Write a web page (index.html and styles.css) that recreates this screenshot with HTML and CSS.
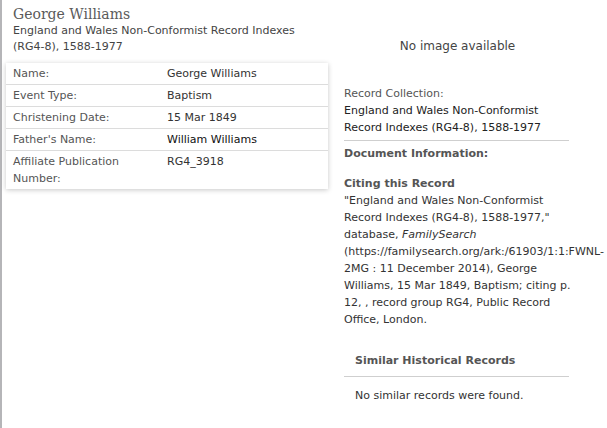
FILE: index.html
```html
<!DOCTYPE html>
<html>
<head>
<meta charset="utf-8">
<link rel="stylesheet" href="styles.css">
</head>
<body>
<div class="page">
  <div class="left">
    <div class="header">
      <h1 class="name">George Williams</h1>
      <div class="coll">England and Wales Non-Conformist Record Indexes (RG4-8), 1588-1977</div>
    </div>
    <table class="facts">
      <tr><td class="lbl">Name:</td><td class="val">George Williams</td></tr>
      <tr><td class="lbl">Event Type:</td><td class="val">Baptism</td></tr>
      <tr><td class="lbl">Christening Date:</td><td class="val">15 Mar 1849</td></tr>
      <tr><td class="lbl">Father's Name:</td><td class="val dark">William Williams</td></tr>
      <tr><td class="lbl">Affiliate Publication Number:</td><td class="val">RG4_3918</td></tr>
    </table>
  </div>
  <div class="right">
    <div class="noimg">No image available</div>
    <div class="side">
      <div class="rc-label">Record Collection:</div>
      <div class="rc-val">England and Wales Non-Conformist Record Indexes (RG4-8), 1588-1977</div>
      <div class="rule"></div>
      <div class="bold">Document Information:</div>
      <div class="bold cite-h">Citing this Record</div>
      <div class="cite">"England and Wales Non-Conformist Record Indexes (RG4-8), 1588-1977," database, <i>FamilySearch</i> (https://familysearch.org/ark:/61903/1:1:FWNL-2MG : 11 December 2014), George Williams, 15 Mar 1849, Baptism; citing p. 12, , record group RG4, Public Record Office, London.</div>
      <div class="bold similar">Similar Historical Records</div>
      <div class="rule rule2"></div>
      <div class="none">No similar records were found.</div>
    </div>
  </div>
</div>
</body>
</html>
```
FILE: styles.css
```css
html, body { margin: 0; padding: 0; background: #fff; }
body {
  font-family: "DejaVu Sans", Verdana, sans-serif;
  font-size: 11px;
  color: #333;
  overflow: hidden;
  width: 607px;
  height: 428px;
}
.page {
  display: flex;
  height: 428px;
  border-left: 2px solid #b5b5b8;
}
.left {
  width: 328px;
  flex: none;
  background: #fff;
}
.header {
  padding: 6px 0 4px 11px;
}
.name {
  margin: 0;
  font-family: "DejaVu Serif", Georgia, serif;
  font-weight: normal;
  font-size: 14px;
  line-height: 17px;
  color: #5a5a5a;
}
.coll {
  line-height: 16px;
  color: #444;
  width: 290px;
}
.facts {
  margin: 4px 0 0 4px;
  width: 322px;
  border-collapse: collapse;
  background: #fff;
  box-shadow: 0 1px 5px rgba(0,0,0,0.22);
}
.facts td {
  padding: 2px 6px 2px 7px;
  line-height: 17px;
  vertical-align: top;
  border-top: 1px solid #dcdcdc;
  color: #555;
}
.facts tr:first-child td { border-top: none; }
.facts td.lbl { width: 141px; }
.facts td.val { color: #333; }
.facts td.dark { color: #111; }
.right {
  flex: 1;
  min-width: 0;
}
.noimg {
  text-align: center;
  font-size: 12px;
  color: #444;
  margin-top: 39px;
  padding-right: 22px;
  line-height: 15px;
}
.side {
  width: 225px;
  margin: 31px 0 0 14px;
  line-height: 17px;
}
.rc-label { color: #555; }
.rc-val { color: #222; }
.rule {
  height: 1px;
  background: #cfcfcf;
  margin: 4px 0 4px 0;
}
.bold { font-weight: bold; color: #555; }
.cite-h { margin-top: 13px; }
.cite { color: #333; margin-right: -12px; }
.similar { margin-top: 24px; padding-left: 11px; }
.rule2 { margin-top: 7px; }
.none { padding-left: 11px; margin-top: 10px; color: #333; }
```
